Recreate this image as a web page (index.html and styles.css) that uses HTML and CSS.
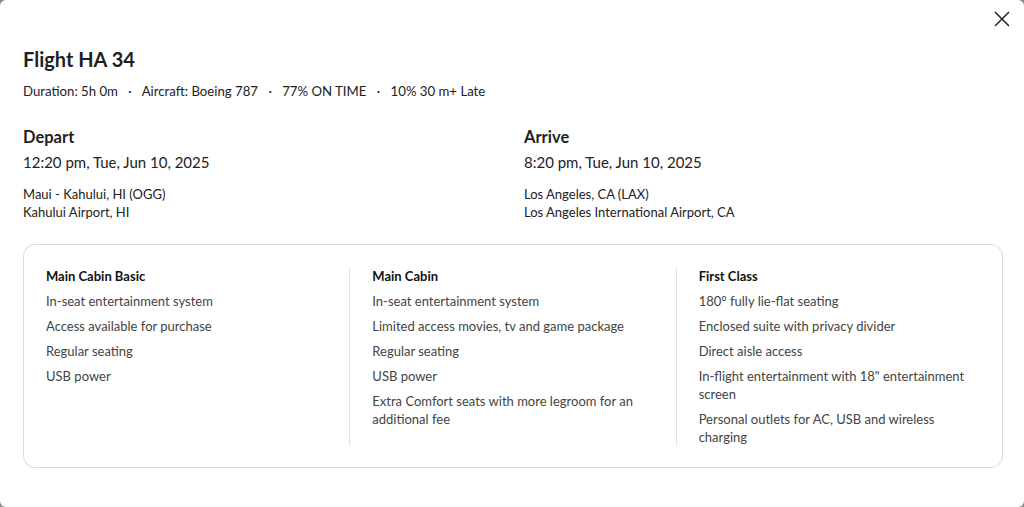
FILE: index.html
```html
<!DOCTYPE html>
<html lang="en">
<head>
<meta charset="utf-8">
<title>Flight HA 34</title>
<link rel="stylesheet" href="styles.css">
</head>
<body>
<div class="modal">
  <button class="close" aria-label="Close">
    <svg width="16" height="16" viewBox="0 0 16 16"><path d="M1 1 L15 15 M15 1 L1 15" stroke="#222" stroke-width="1.5" fill="none"/></svg>
  </button>
  <h1 class="title">Flight HA 34</h1>
  <p class="meta">Duration: 5h 0m <span class="dot">·</span> Aircraft: Boeing 787 <span class="dot">·</span> 77% ON TIME <span class="dot">·</span> 10% 30 m+ Late</p>
  <div class="legs">
    <div class="leg">
      <h2 class="leg-title">Depart</h2>
      <div class="leg-time">12:20 pm, Tue, Jun 10, 2025</div>
      <div class="leg-place">Maui - Kahului, HI (OGG)<br>Kahului Airport, HI</div>
    </div>
    <div class="leg">
      <h2 class="leg-title">Arrive</h2>
      <div class="leg-time">8:20 pm, Tue, Jun 10, 2025</div>
      <div class="leg-place">Los Angeles, CA (LAX)<br>Los Angeles International Airport, CA</div>
    </div>
  </div>
  <div class="cabins">
    <div class="cabin">
      <h3 class="cabin-title">Main Cabin Basic</h3>
      <ul class="cabin-list">
        <li>In-seat entertainment system</li>
        <li>Access available for purchase</li>
        <li>Regular seating</li>
        <li>USB power</li>
      </ul>
    </div>
    <div class="cabin">
      <h3 class="cabin-title">Main Cabin</h3>
      <ul class="cabin-list">
        <li>In-seat entertainment system</li>
        <li>Limited access movies, tv and game package</li>
        <li>Regular seating</li>
        <li>USB power</li>
        <li>Extra Comfort seats with more legroom for an additional fee</li>
      </ul>
    </div>
    <div class="cabin">
      <h3 class="cabin-title">First Class</h3>
      <ul class="cabin-list">
        <li>180° fully lie-flat seating</li>
        <li>Enclosed suite with privacy divider</li>
        <li>Direct aisle access</li>
        <li>In-flight entertainment with 18" entertainment screen</li>
        <li>Personal outlets for AC, USB and wireless charging</li>
      </ul>
    </div>
  </div>
</div>
</body>
</html>
```

FILE: styles.css
```css
* { box-sizing: border-box; }
html, body { margin: 0; padding: 0; }
body {
  background: #8a8a8a;
  font-family: Lato, "Noto Sans", sans-serif;
  color: #222;
}
.modal {
  position: relative;
  background: #fff;
  min-height: 100vh;
  border-radius: 6px;
  padding: 44px 21px 30px 23px;
}
.close {
  position: absolute;
  top: 11px;
  right: 14px;
  border: 0;
  background: none;
  padding: 0;
  width: 16px;
  height: 16px;
  cursor: pointer;
}
.close svg { display: block; }
.title {
  margin: 0;
  font-size: 20px;
  line-height: 30px;
  font-weight: 700;
  color: #1f1f1f;
}
.meta {
  margin: 8px 0 0;
  font-size: 13.2px;
  line-height: 18px;
  color: #222;
}
.dot { padding: 0 7px; }
.legs {
  display: grid;
  grid-template-columns: 1fr 1fr;
  column-gap: 22px;
  margin-top: 25px;
}
.leg-title {
  margin: 0;
  font-size: 16.5px;
  line-height: 24px;
  font-weight: 700;
  color: #1f1f1f;
}
.leg-time {
  font-size: 15px;
  line-height: 24px;
  color: #222;
  margin-top: 1px;
}
.leg-place {
  margin-top: 11px;
  font-size: 13px;
  line-height: 18px;
  color: #222;
}
.cabins {
  display: flex;
  margin-top: 23px;
  border: 1px solid #d9d9d9;
  border-radius: 12px;
  padding: 22px 0 21px;
}
.cabin {
  flex: 1;
  padding: 0 22px;
}
.cabin + .cabin { border-left: 1px solid #e3e3e3; }
.cabin-title {
  margin: 0;
  font-size: 13px;
  line-height: 18px;
  font-weight: 700;
  color: #111;
}
.cabin-list {
  list-style: none;
  margin: 7px 0 0;
  padding: 0;
  display: flex;
  flex-direction: column;
  gap: 7px;
}
.cabin-list li {
  font-size: 13px;
  line-height: 18px;
  color: #444;
}
```
